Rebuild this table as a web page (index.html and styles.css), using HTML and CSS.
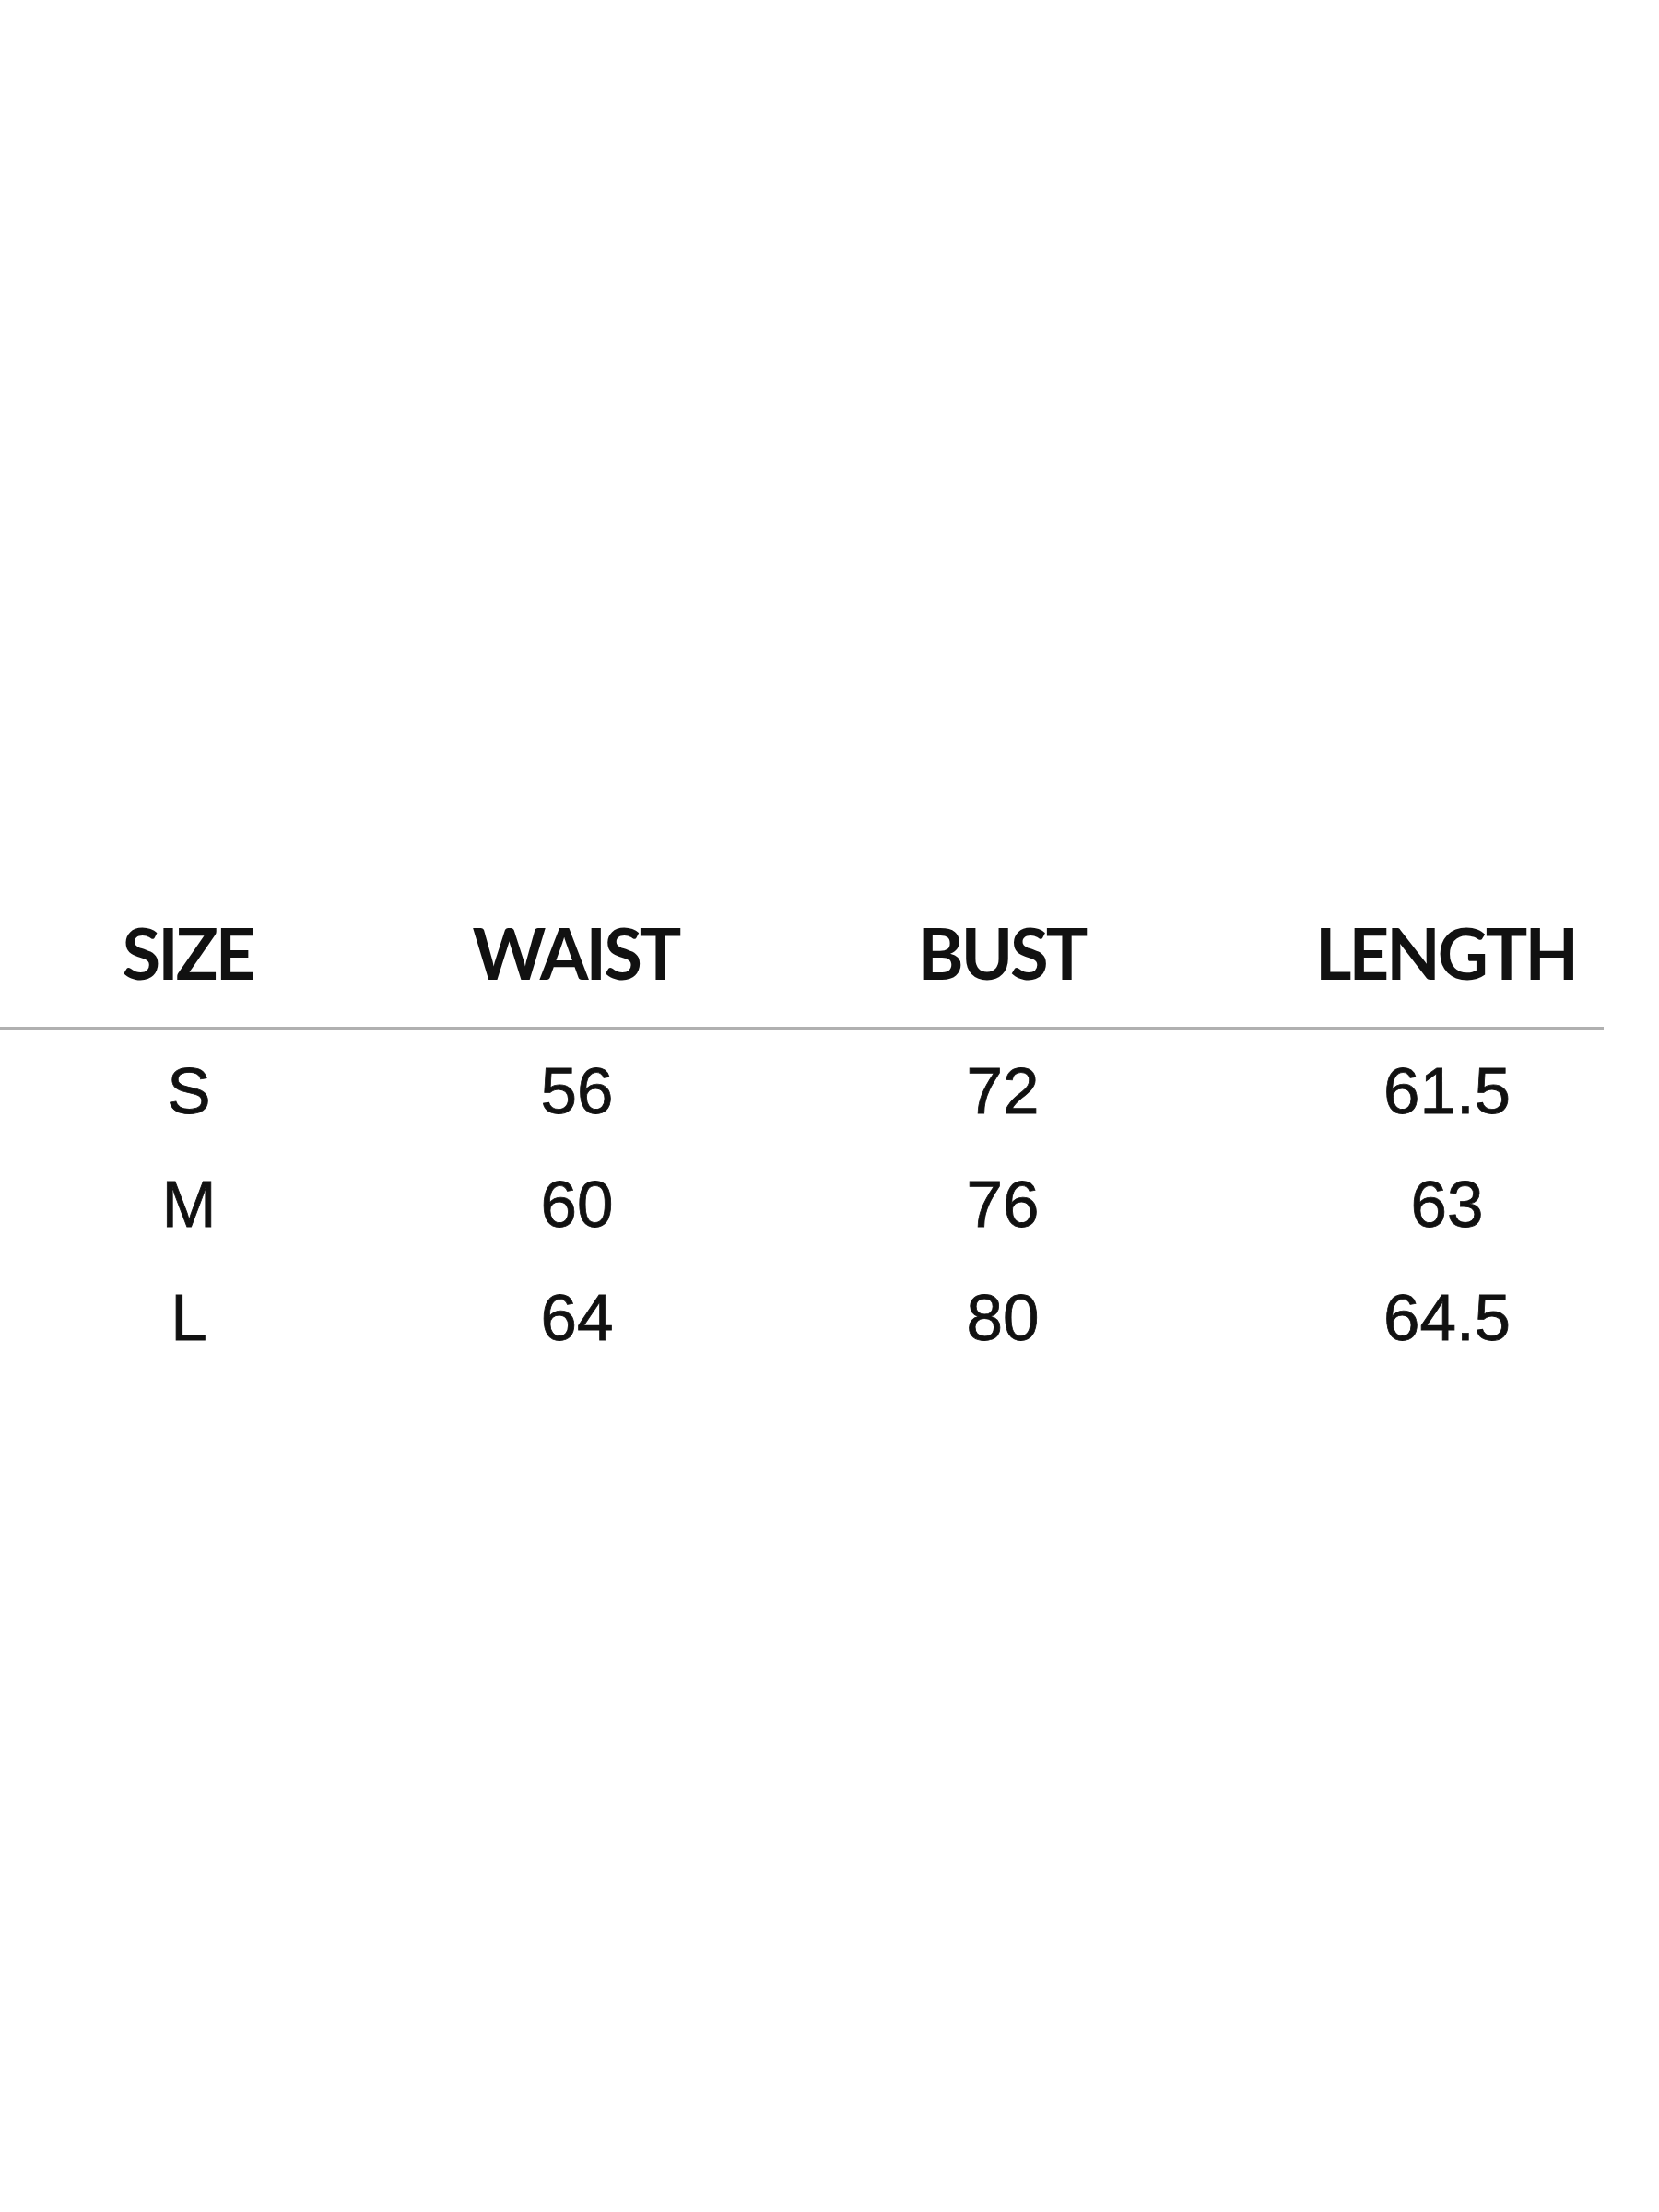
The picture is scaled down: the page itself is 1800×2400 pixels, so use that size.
FILE: index.html
```html
<!DOCTYPE html>
<html>
<head>
<meta charset="utf-8">
<link rel="stylesheet" href="styles.css">
</head>
<body>
<div class="sheet">
  <div class="row head">
    <div class="cell">SIZE</div>
    <div class="cell">WAIST</div>
    <div class="cell">BUST</div>
    <div class="cell last">LENGTH</div>
  </div>
  <div class="rule"></div>
  <div class="row data">
    <div class="cell">S</div>
    <div class="cell">56</div>
    <div class="cell">72</div>
    <div class="cell last">61.5</div>
  </div>
  <div class="row data">
    <div class="cell">M</div>
    <div class="cell">60</div>
    <div class="cell">76</div>
    <div class="cell last">63</div>
  </div>
  <div class="row data">
    <div class="cell">L</div>
    <div class="cell">64</div>
    <div class="cell">80</div>
    <div class="cell last">64.5</div>
  </div>
</div>
</body>
</html>
```
FILE: styles.css
```css
html, body {
  margin: 0;
  padding: 0;
  background: #ffffff;
}
body {
  width: 1800px;
  height: 2400px;
  overflow: hidden;
  color: #111111;
}
.sheet {
  padding-top: 996px;
}
.row {
  display: grid;
  grid-template-columns: 410px 432px 492px 466px;
}
.cell {
  text-align: center;
}
.cell.last {
  padding-left: 6px;
}
.head .cell {
  font-family: Lato, "Open Sans", sans-serif;
  font-weight: 700;
  font-size: 76px;
  line-height: 76px;
  letter-spacing: -3px;
  text-indent: -3px;
}
.rule {
  width: 1740px;
  height: 4px;
  background: #b0b0b0;
  margin-top: 42px;
  margin-bottom: 4px;
}
.data .cell {
  font-family: "Liberation Sans", Arial, sans-serif;
  font-size: 71px;
  line-height: 123px;
  -webkit-text-stroke: 0.8px #111111;
}
```
